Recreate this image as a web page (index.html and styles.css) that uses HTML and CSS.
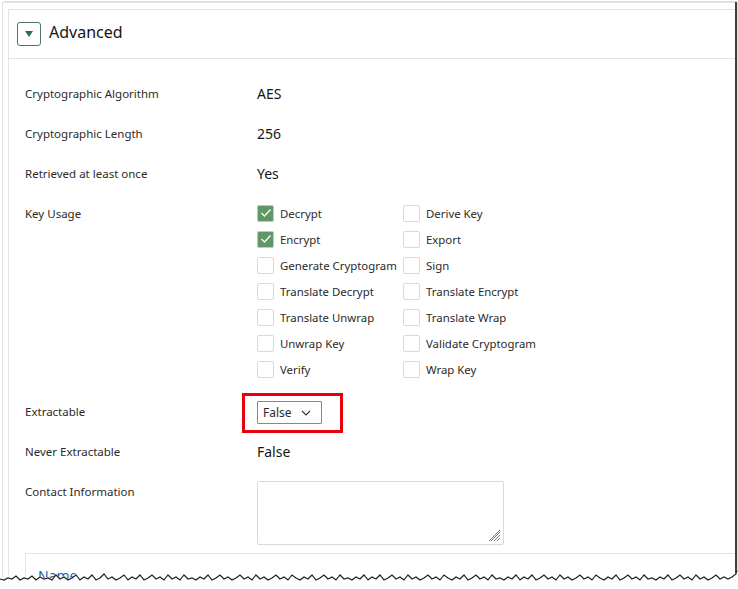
FILE: index.html
```html
<!DOCTYPE html>
<html>
<head>
<meta charset="utf-8">
<link rel="stylesheet" href="styles.css">
</head>
<body>
<div class="shot">
  <div class="panel">
    <div class="panel-head">
      <button class="toggle" aria-label="Collapse">
        <svg width="10" height="8" viewBox="0 0 10 8"><path d="M1 1 H9 L5 7 Z" fill="#2f6b4f"/></svg>
      </button>
      <h2 class="title">Advanced</h2>
    </div>
    <div class="panel-body">
      <div class="row"><div class="label">Cryptographic Algorithm</div><div class="value">AES</div></div>
      <div class="row"><div class="label">Cryptographic Length</div><div class="value">256</div></div>
      <div class="row"><div class="label">Retrieved at least once</div><div class="value">Yes</div></div>
      <div class="row row-usage">
        <div class="label">Key Usage</div>
        <div class="checks">
          <label class="check"><span class="box on"><svg width="12" height="10" viewBox="0 0 12 10"><path d="M1.5 5 L4.5 8 L10.5 1.5" fill="none" stroke="#fff" stroke-width="1.3"/></svg></span>Decrypt</label>
          <label class="check"><span class="box"></span>Derive Key</label>
          <label class="check"><span class="box on"><svg width="12" height="10" viewBox="0 0 12 10"><path d="M1.5 5 L4.5 8 L10.5 1.5" fill="none" stroke="#fff" stroke-width="1.3"/></svg></span>Encrypt</label>
          <label class="check"><span class="box"></span>Export</label>
          <label class="check"><span class="box"></span>Generate Cryptogram</label>
          <label class="check"><span class="box"></span>Sign</label>
          <label class="check"><span class="box"></span>Translate Decrypt</label>
          <label class="check"><span class="box"></span>Translate Encrypt</label>
          <label class="check"><span class="box"></span>Translate Unwrap</label>
          <label class="check"><span class="box"></span>Translate Wrap</label>
          <label class="check"><span class="box"></span>Unwrap Key</label>
          <label class="check"><span class="box"></span>Validate Cryptogram</label>
          <label class="check"><span class="box"></span>Verify</label>
          <label class="check"><span class="box"></span>Wrap Key</label>
        </div>
      </div>
      <div class="row">
        <div class="label">Extractable</div>
        <div class="value value-select">
          <div class="select-wrap">
            <div class="select">False
              <svg width="10" height="6" viewBox="0 0 10 6"><path d="M1 1 L5 5 L9 1" fill="none" stroke="#333" stroke-width="1.1"/></svg>
            </div>
            <div class="highlight"></div>
          </div>
        </div>
      </div>
      <div class="row"><div class="label">Never Extractable</div><div class="value">False</div></div>
      <div class="row row-contact">
        <div class="label">Contact Information</div>
        <div class="value"><div class="textarea">
          <svg class="grip" width="12" height="12" viewBox="0 0 12 12"><path d="M11 2 L2 11 M11 5 L5 11 M11 8 L8 11 M11 0 L0 11" stroke="#777" stroke-width="1"/></svg>
        </div></div>
      </div>
      <div class="subpanel"><div class="sub-title">Name</div></div>
    </div>
  </div>
  <svg class="tear" width="741" height="24" viewBox="0 0 741 24">
    <defs><filter id="bl" x="-1%" y="-50%" width="102%" height="200%"><feGaussianBlur stdDeviation="0.6"/></filter></defs>
    <path fill="#fff" d="M0 9 L4 10 L8 8 L12 9 L16 6 L20 10 L24 8 L28 9 L32 6 L36 10 L40 7 L44 9 L48 8 L52 10 L56 5 L60 9 L64 7 L68 10 L72 8 L76 5 L80 10 L84 7 L88 9 L92 5 L96 10 L100 8 L104 4 L108 9 L112 7 L116 10 L120 8 L124 5 L128 10 L132 7 L136 9 L140 5 L144 10 L148 8 L152 5 L156 9 L160 7 L164 10 L168 5 L172 9 L176 7 L180 10 L184 5 L188 9 L192 8 L196 10 L200 7 L204 9 L208 5 L212 10 L216 8 L220 5 L224 9 L228 7 L232 10 L236 8 L240 5 L244 9 L248 7 L252 10 L256 5 L260 9 L264 7 L268 10 L272 8 L276 5 L280 9 L284 7 L288 10 L292 5 L296 8 L300 10 L304 7 L308 9 L312 5 L316 10 L320 8 L324 5 L328 9 L332 7 L336 10 L340 5 L344 9 L348 8 L352 10 L356 7 L360 9 L364 5 L368 10 L372 7 L376 9 L380 5 L384 10 L388 8 L392 5 L396 9 L400 7 L404 10 L408 5 L412 9 L416 7 L420 10 L424 8 L428 5 L432 9 L436 7 L440 10 L444 5 L448 8 L452 10 L456 7 L460 9 L464 5 L468 10 L472 8 L476 5 L480 9 L484 7 L488 10 L492 5 L496 9 L500 8 L504 10 L508 7 L512 9 L516 5 L520 10 L524 7 L528 9 L532 5 L536 10 L540 8 L544 5 L548 9 L552 7 L556 10 L560 5 L564 9 L568 7 L572 10 L576 8 L580 5 L584 9 L588 7 L592 10 L596 5 L600 8 L604 10 L608 7 L612 9 L616 5 L620 10 L624 8 L628 5 L632 9 L636 7 L640 10 L644 5 L648 9 L652 8 L656 10 L660 7 L664 9 L668 5 L672 10 L676 8 L680 5 L684 9 L688 7 L692 10 L696 5 L700 9 L704 7 L708 10 L712 8 L716 5 L720 9 L724 7 L728 9 L732 7 L736 4 L737 0 L741 0 L741 24 L0 24 Z"/>
    <path filter="url(#bl)" fill="none" stroke="#222" stroke-width="1.2" transform="translate(0,1)" d="M0 9 L4 10 L8 8 L12 9 L16 6 L20 10 L24 8 L28 9 L32 6 L36 10 L40 7 L44 9 L48 8 L52 10 L56 5 L60 9 L64 7 L68 10 L72 8 L76 5 L80 10 L84 7 L88 9 L92 5 L96 10 L100 8 L104 4 L108 9 L112 7 L116 10 L120 8 L124 5 L128 10 L132 7 L136 9 L140 5 L144 10 L148 8 L152 5 L156 9 L160 7 L164 10 L168 5 L172 9 L176 7 L180 10 L184 5 L188 9 L192 8 L196 10 L200 7 L204 9 L208 5 L212 10 L216 8 L220 5 L224 9 L228 7 L232 10 L236 8 L240 5 L244 9 L248 7 L252 10 L256 5 L260 9 L264 7 L268 10 L272 8 L276 5 L280 9 L284 7 L288 10 L292 5 L296 8 L300 10 L304 7 L308 9 L312 5 L316 10 L320 8 L324 5 L328 9 L332 7 L336 10 L340 5 L344 9 L348 8 L352 10 L356 7 L360 9 L364 5 L368 10 L372 7 L376 9 L380 5 L384 10 L388 8 L392 5 L396 9 L400 7 L404 10 L408 5 L412 9 L416 7 L420 10 L424 8 L428 5 L432 9 L436 7 L440 10 L444 5 L448 8 L452 10 L456 7 L460 9 L464 5 L468 10 L472 8 L476 5 L480 9 L484 7 L488 10 L492 5 L496 9 L500 8 L504 10 L508 7 L512 9 L516 5 L520 10 L524 7 L528 9 L532 5 L536 10 L540 8 L544 5 L548 9 L552 7 L556 10 L560 5 L564 9 L568 7 L572 10 L576 8 L580 5 L584 9 L588 7 L592 10 L596 5 L600 8 L604 10 L608 7 L612 9 L616 5 L620 10 L624 8 L628 5 L632 9 L636 7 L640 10 L644 5 L648 9 L652 8 L656 10 L660 7 L664 9 L668 5 L672 10 L676 8 L680 5 L684 9 L688 7 L692 10 L696 5 L700 9 L704 7 L708 10 L712 8 L716 5 L720 9 L724 7 L728 9 L732 7 L736 4 L737 0"/>
  </svg>
</div>
</body>
</html>
```

FILE: styles.css
```css
* { box-sizing: border-box; }
html, body { margin: 0; padding: 0; background: #fff; }
body {
  width: 738px;
  height: 589px;
  overflow: hidden;
  font-family: "Noto Sans", "Open Sans", sans-serif;
  color: #161513;
}
.shot {
  position: relative;
  margin: 2px 0 0 2px;
  width: 733px;
  height: 576px;
  border-top: 1px solid #e3e3e3;
  border-left: 1px solid #e3e3e3;
  box-shadow: 2px 0 1px rgba(0,0,0,0.75);
  padding: 6px 0 0 5px;
  background: #fff;
}
.panel {
  border-top: 1px solid #e4e4e4;
  border-left: 1px solid #e4e4e4;
  height: 100%;
}
.panel-head {
  display: flex;
  align-items: center;
  height: 49px;
  padding-left: 8px;
  border-bottom: 1px solid #e4e4e4;
}
.toggle {
  width: 24px;
  height: 24px;
  margin: 0;
  padding: 0;
  border: 1px solid #4b7a5c;
  border-radius: 3px;
  background: #fff;
  display: flex;
  align-items: center;
  justify-content: center;
}
.title {
  margin: 0 0 4px 8px;
  font-size: 16px;
  line-height: 20px;
  font-weight: 400;
  color: #161513;
}
.panel-body {
  padding: 15px 0 0 16px;
}
.row {
  display: grid;
  grid-template-columns: 232px 1fr;
  padding: 10px 0;
}
.label {
  font-size: 11.5px;
  line-height: 20px;
  color: #2c2a28;
}
.value {
  font-size: 14px;
  line-height: 20px;
  color: #161513;
}
.row-usage { padding-bottom: 12px; }
.checks {
  display: grid;
  grid-template-columns: 146px auto;
  row-gap: 6px;
  justify-content: start;
  margin-top: -1px;
  margin-bottom: 1px;
}
.check {
  display: flex;
  align-items: center;
  height: 20px;
  font-size: 11.4px;
  white-space: nowrap;
  color: #2c2a28;
}
.box {
  width: 17px;
  height: 17px;
  border: 1px solid #dcd9d2;
  border-radius: 2px;
  margin-right: 6px;
  display: flex;
  align-items: center;
  justify-content: center;
  flex: none;
}
.box.on {
  background: #5d9866;
  border-color: #b9cdb8;
}
.value-select {
  height: 20px;
  display: flex;
  align-items: center;
}
.select-wrap {
  position: relative;
  margin-top: 1px;
}
.select {
  width: 65px;
  height: 23px;
  border: 1px solid #6e9a70;
  border-radius: 1px;
  font-size: 12px;
  line-height: 21px;
  padding-left: 5px;
  display: flex;
  align-items: center;
  gap: 9px;
  color: #2c2a28;
}
.highlight {
  position: absolute;
  left: -15px;
  top: -8px;
  width: 101px;
  height: 40px;
  border: 3px solid #e8000b;
}
.row-contact { padding-bottom: 8px; }
.textarea {
  position: relative;
  width: 247px;
  height: 64px;
  margin-top: -1px;
  border: 1px solid #dcd9d2;
  border-radius: 2px;
}
.grip {
  position: absolute;
  right: 2px;
  bottom: 2px;
}
.subpanel {
  border-top: 1px solid #e4e4e4;
  border-left: 1px solid #e4e4e4;
  height: 40px;
  padding: 12px 0 0 12px;
}
.sub-title {
  font-size: 14px;
  color: #1d5fa7;
}
.tear {
  position: absolute;
  left: -3px;
  top: 566px;
  display: block;
}
```
